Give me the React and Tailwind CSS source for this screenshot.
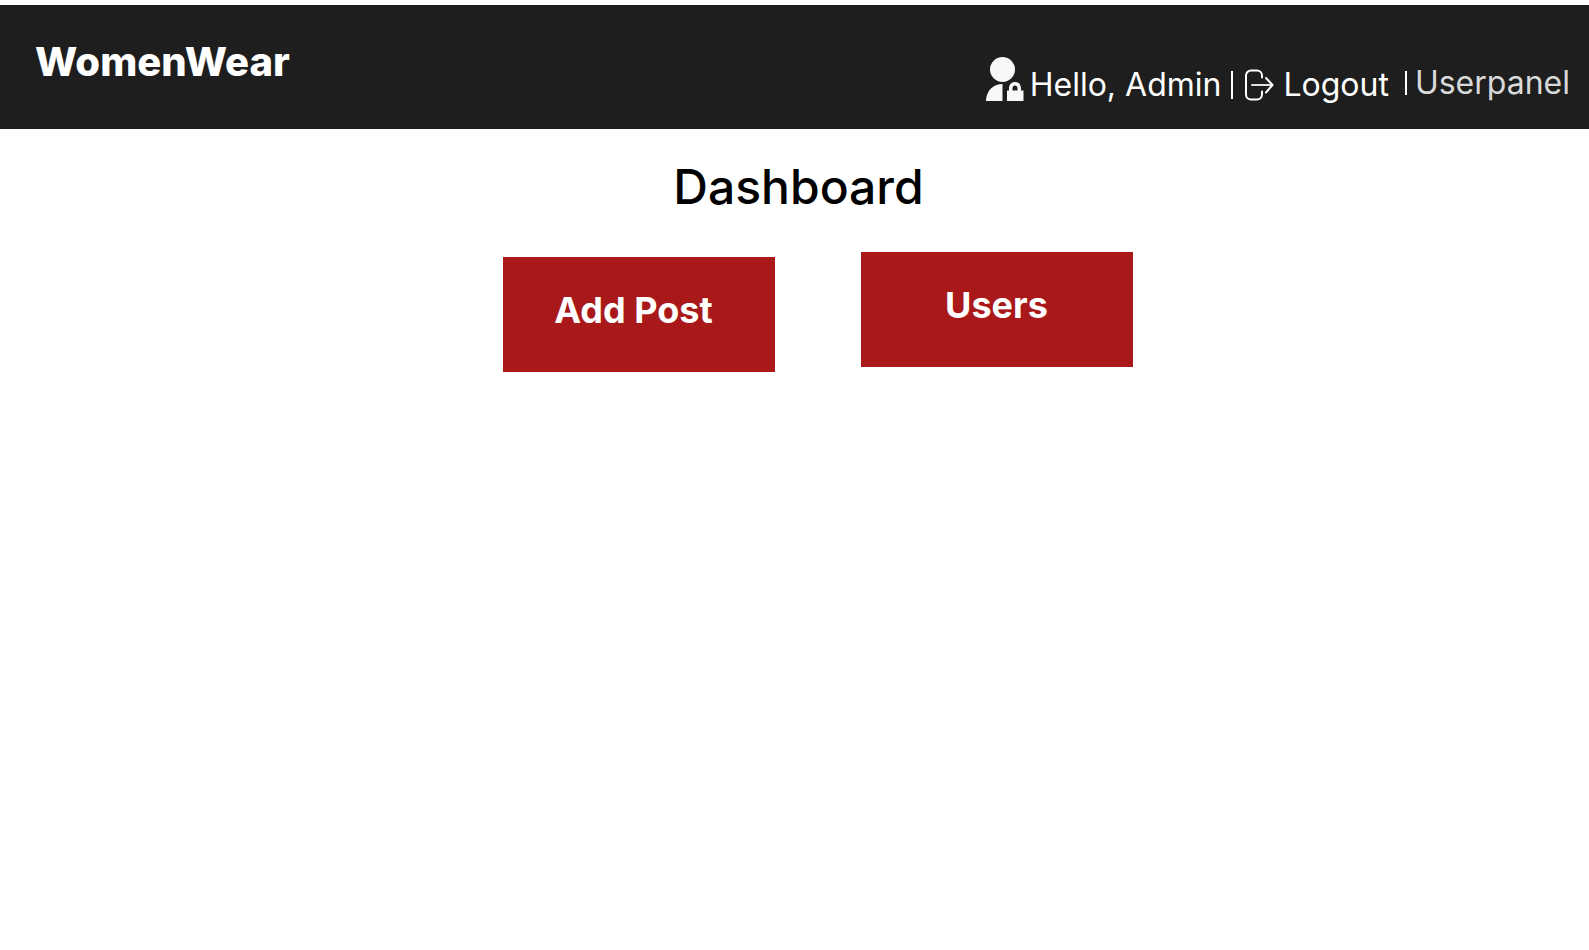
function AdminIcon() {
  return (
    <svg width="38" height="46" viewBox="0 0 38 46" fill="#f8f8f8" aria-hidden="true">
      <circle cx="16.5" cy="13.5" r="12.5" />
      <path d="M0 45C0 35 7 28 16.5 28V45Z" />
      <path
        fillRule="evenodd"
        d="M21 34.5H23V32.5C23 28.5 25.500 26 29 26S35 28.500 35 32.500V34.500H37.500V45H21ZM26.500 34.500H31.500V32.500C31.500 30.700 30.500 29.500 29 29.500S26.500 30.700 26.500 32.500Z"
      />
    </svg>
  );
}

function LogoutIcon() {
  return (
    <svg
      width="30"
      height="32"
      viewBox="0 0 30 32"
      fill="none"
      stroke="#ffffff"
      strokeWidth="2"
      strokeLinecap="round"
      strokeLinejoin="round"
      aria-hidden="true"
    >
      <path d="M17 8.500V6.500A5 5 0 0 0 12 1.500H6A5 5 0 0 0 1 6.500V25.500A5 5 0 0 0 6 30.500H12A5 5 0 0 0 17 25.500V22.500" />
      <path d="M7 16H27" stroke="#e0e0e0" />
      <path d="M21 9L27.500 16L21 23.500" />
    </svg>
  );
}

export default function App() {
  return (
    <div className="min-h-screen bg-white pt-[5px] font-['Inter',sans-serif]">
      <header className="flex items-start justify-between bg-[#1e1e1e] pt-8 pr-[19px] pb-5 pl-[35px] text-white">
        <a href="#home" className="text-[40px] leading-[50px] font-extrabold">
          WomenWear
        </a>
        <nav className="flex items-center pt-4 text-[32px] leading-[48px] font-normal">
          <div className="flex items-center gap-1.5">
            <div className="pb-1">
              <AdminIcon />
            </div>
            <span className="pt-2">Hello, Admin</span>
          </div>
          <span className="mt-2 ml-2.5 h-7 w-0.5 bg-white" />
          <button type="button" className="ml-3 flex items-center gap-2 pt-2">
            <LogoutIcon />
            Logout
          </button>
          <span className="mt-1 ml-4 h-6 w-0.5 bg-white" />
          <a href="#userpanel" className="ml-2 pt-1 text-[#d9d9d9]">
            Userpanel
          </a>
        </nav>
      </header>
      <main className="flex flex-col items-center pt-7 pl-2">
        <h1 className="text-[48px] leading-[60px] font-medium text-black">Dashboard</h1>
        <div className="mt-[35px] flex gap-[86px] pl-[38px]">
          <button
            type="button"
            className="mt-[5px] h-[115px] w-[272px] bg-[#a91919] pr-2.5 pb-2.5 text-4xl font-bold text-white"
          >
            Add Post
          </button>
          <button
            type="button"
            className="h-[115px] w-[272px] bg-[#a91919] pb-2.5 text-4xl font-bold text-white"
          >
            Users
          </button>
        </div>
      </main>
    </div>
  );
}
